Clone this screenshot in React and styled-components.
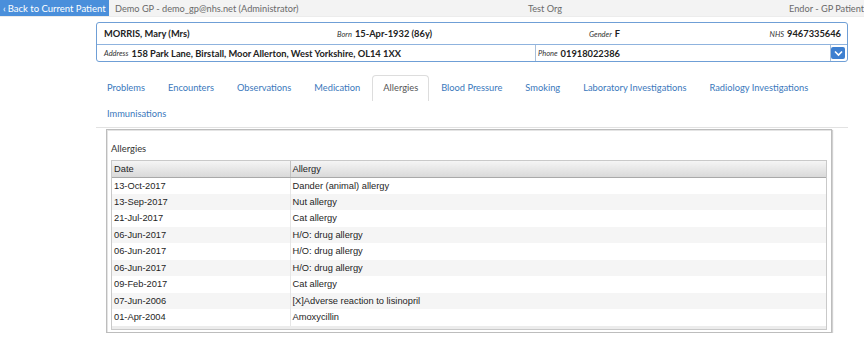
import React from 'react';
import styled, { createGlobalStyle } from 'styled-components';

const Global = createGlobalStyle`
  html, body { margin: 0; padding: 0; background: #fff; }
  body { font-family: Lato, "Open Sans", sans-serif; -webkit-font-smoothing: antialiased; }
  * { box-sizing: border-box; }
`;

const TopBar = styled.div`
  display: grid;
  grid-template-columns: auto 1fr 80px 279px;
  align-items: center;
  height: 17px;
  background: #f3f3f3;
  border-bottom: 1px solid #ececec;
  font-size: 9.2px;
  color: #6a6a6a;
  white-space: nowrap;
  overflow: hidden;
`;

const BackButton = styled.button`
  display: flex;
  align-items: center;
  gap: 2px;
  height: 17px;
  width: 109px;
  margin: 0;
  padding: 0 0 0 3px;
  border: none;
  background: #4a8fdb;
  color: #fff;
  font-family: inherit;
  font-size: 9.5px;
  white-space: nowrap;
  cursor: pointer;
`;

const BarText = styled.span`
  padding-left: ${p => p.$pl || 0}px;
  text-align: ${p => p.$align || 'left'};
  overflow: hidden;
`;

const Content = styled.div`
  padding: 5px 16px 0 96px;
  width: 864px;
`;

const Card = styled.div`
  border: 1px solid #6f9fd6;
  border-radius: 3px;
  background: #fff;
`;

const CardTop = styled.div`
  display: grid;
  grid-template-columns: 233px 252px 1fr auto;
  align-items: center;
  height: 22px;
  padding: 0 6px 0 7px;
  border-bottom: 1px solid #8fb3de;
  color: #222;
`;

const Name = styled.span`
  font-size: 9.3px;
  font-weight: 700;
`;

const Field = styled.span`
  font-size: 9.3px;
  font-weight: 700;
  text-align: ${p => p.$align || 'left'};
  white-space: nowrap;
`;

const Label = styled.i`
  font-size: 7.5px;
  font-weight: 400;
  margin-right: 3px;
  color: #333;
`;

const CardBottom = styled.div`
  display: grid;
  grid-template-columns: 439px 1fr 16px;
  align-items: center;
  height: 16px;
`;

const Cell = styled.div`
  height: 16px;
  display: flex;
  align-items: center;
  padding-left: ${p => p.$pl}px;
  border-right: 1px solid #a9bfd9;
  font-size: 9.3px;
  font-weight: 700;
  color: #222;
  white-space: nowrap;
`;

const Toggle = styled.button`
  width: 14px;
  height: 12px;
  margin: 0;
  padding: 0;
  border: none;
  border-radius: 2px;
  background: #3d7fd0;
  display: flex;
  align-items: center;
  justify-content: center;
`;

const Tabs = styled.ul`
  display: flex;
  flex-wrap: wrap;
  list-style: none;
  margin: 13px 0 0;
  padding: 0;
  border-bottom: 1px solid #e2e2e2;
`;

const Tab = styled.li`
  height: 26px;
  line-height: 24px;
  padding: 0 10px;
  margin-right: 1px;
  border: 1px solid ${p => (p.$active ? '#dddddd' : 'transparent')};
  border-bottom: none;
  border-radius: 4px 4px 0 0;
  background: ${p => (p.$active ? '#fff' : 'transparent')};
  color: ${p => (p.$active ? '#555' : '#3a78bc')};
  font-size: 9.3px;
  white-space: nowrap;
  cursor: pointer;
`;

const Panel = styled.div`
  margin: 1px 16px 0 10px;
  padding: 0 4px 2px;
  border: 1px solid #bdbdbd;
  box-shadow: inset 1px 1px 0 #e4e4e4, 1px 1px 1px rgba(0, 0, 0, 0.18);
  background: #fff;
`;

const PanelTitle = styled.div`
  padding: 12px 0 4px;
  line-height: 14px;
  font-size: 9.4px;
  color: #333;
`;

const TableWrap = styled.div`
  border: 1px solid #c9c9c9;
  background: #ececec;
  padding-bottom: 3px;
`;

const Table = styled.table`
  width: 100%;
  border-collapse: collapse;
  background: #fff;
  font-family: "Liberation Sans", Arial, sans-serif;
  font-size: 9.3px;
  color: #1e1e1e;
`;

const Th = styled.th`
  height: 16px;
  padding: 0 2px;
  text-align: left;
  font-weight: 400;
  background: linear-gradient(#f5f5f5, #d9d9d9);
  border-bottom: 1px solid #a9a9a9;
  border-right: 1px solid #c2c2c2;
  width: ${p => p.$w || 'auto'};
  &:last-child { border-right: none; }
`;

const Tr = styled.tr`
  height: 16.5px;
  background: ${p => (p.$striped ? '#f5f5f5' : '#fff')};
`;

const Td = styled.td`
  padding: 0 2px;
  border-right: 1px solid #e6e6e6;
  &:last-child { border-right: none; }
`;

const rows = [
  ['13-Oct-2017', 'Dander (animal) allergy'],
  ['13-Sep-2017', 'Nut allergy'],
  ['21-Jul-2017', 'Cat allergy'],
  ['06-Jun-2017', 'H/O: drug allergy'],
  ['06-Jun-2017', 'H/O: drug allergy'],
  ['06-Jun-2017', 'H/O: drug allergy'],
  ['09-Feb-2017', 'Cat allergy'],
  ['07-Jun-2006', '[X]Adverse reaction to lisinopril'],
  ['01-Apr-2004', 'Amoxycillin'],
];

const tabs = [
  'Problems', 'Encounters', 'Observations', 'Medication', 'Allergies',
  'Blood Pressure', 'Smoking', 'Laboratory Investigations',
  'Radiology Investigations', 'Immunisations',
];

export default function App() {
  return (
    <>
      <Global />
      <TopBar>
        <BackButton><span>‹</span>Back to Current Patient</BackButton>
        <BarText $pl={6}>Demo GP - demo_gp@nhs.net (Administrator)</BarText>
        <BarText $align="center">Test Org</BarText>
        <BarText $align="right">Endor - GP Patient</BarText>
      </TopBar>
      <Content>
        <Card>
          <CardTop>
            <Name>MORRIS, Mary (Mrs)</Name>
            <Field><Label>Born</Label>15-Apr-1932 (86y)</Field>
            <Field><Label>Gender</Label>F</Field>
            <Field $align="right"><Label>NHS</Label>9467335646</Field>
          </CardTop>
          <CardBottom>
            <Cell $pl={7}><Label>Address</Label>158 Park Lane, Birstall, Moor Allerton, West Yorkshire, OL14 1XX</Cell>
            <Cell $pl={2}><Label>Phone</Label>01918022386</Cell>
            <Toggle aria-label="expand">
              <svg width="9" height="7" viewBox="0 0 9 7">
                <path d="M1 1.5 L4.5 5 L8 1.5" fill="none" stroke="#fff" strokeWidth="1.6" />
              </svg>
            </Toggle>
          </CardBottom>
        </Card>
        <Tabs>
          {tabs.map(t => (
            <Tab key={t} $active={t === 'Allergies'}>{t}</Tab>
          ))}
        </Tabs>
        <Panel>
          <PanelTitle>Allergies</PanelTitle>
          <TableWrap>
            <Table>
              <thead>
                <tr>
                  <Th $w="178px">Date</Th>
                  <Th>Allergy</Th>
                </tr>
              </thead>
              <tbody>
                {rows.map((r, i) => (
                  <Tr key={i} $striped={i % 2 === 1}>
                    <Td>{r[0]}</Td>
                    <Td>{r[1]}</Td>
                  </Tr>
                ))}
              </tbody>
            </Table>
          </TableWrap>
        </Panel>
      </Content>
    </>
  );
}
